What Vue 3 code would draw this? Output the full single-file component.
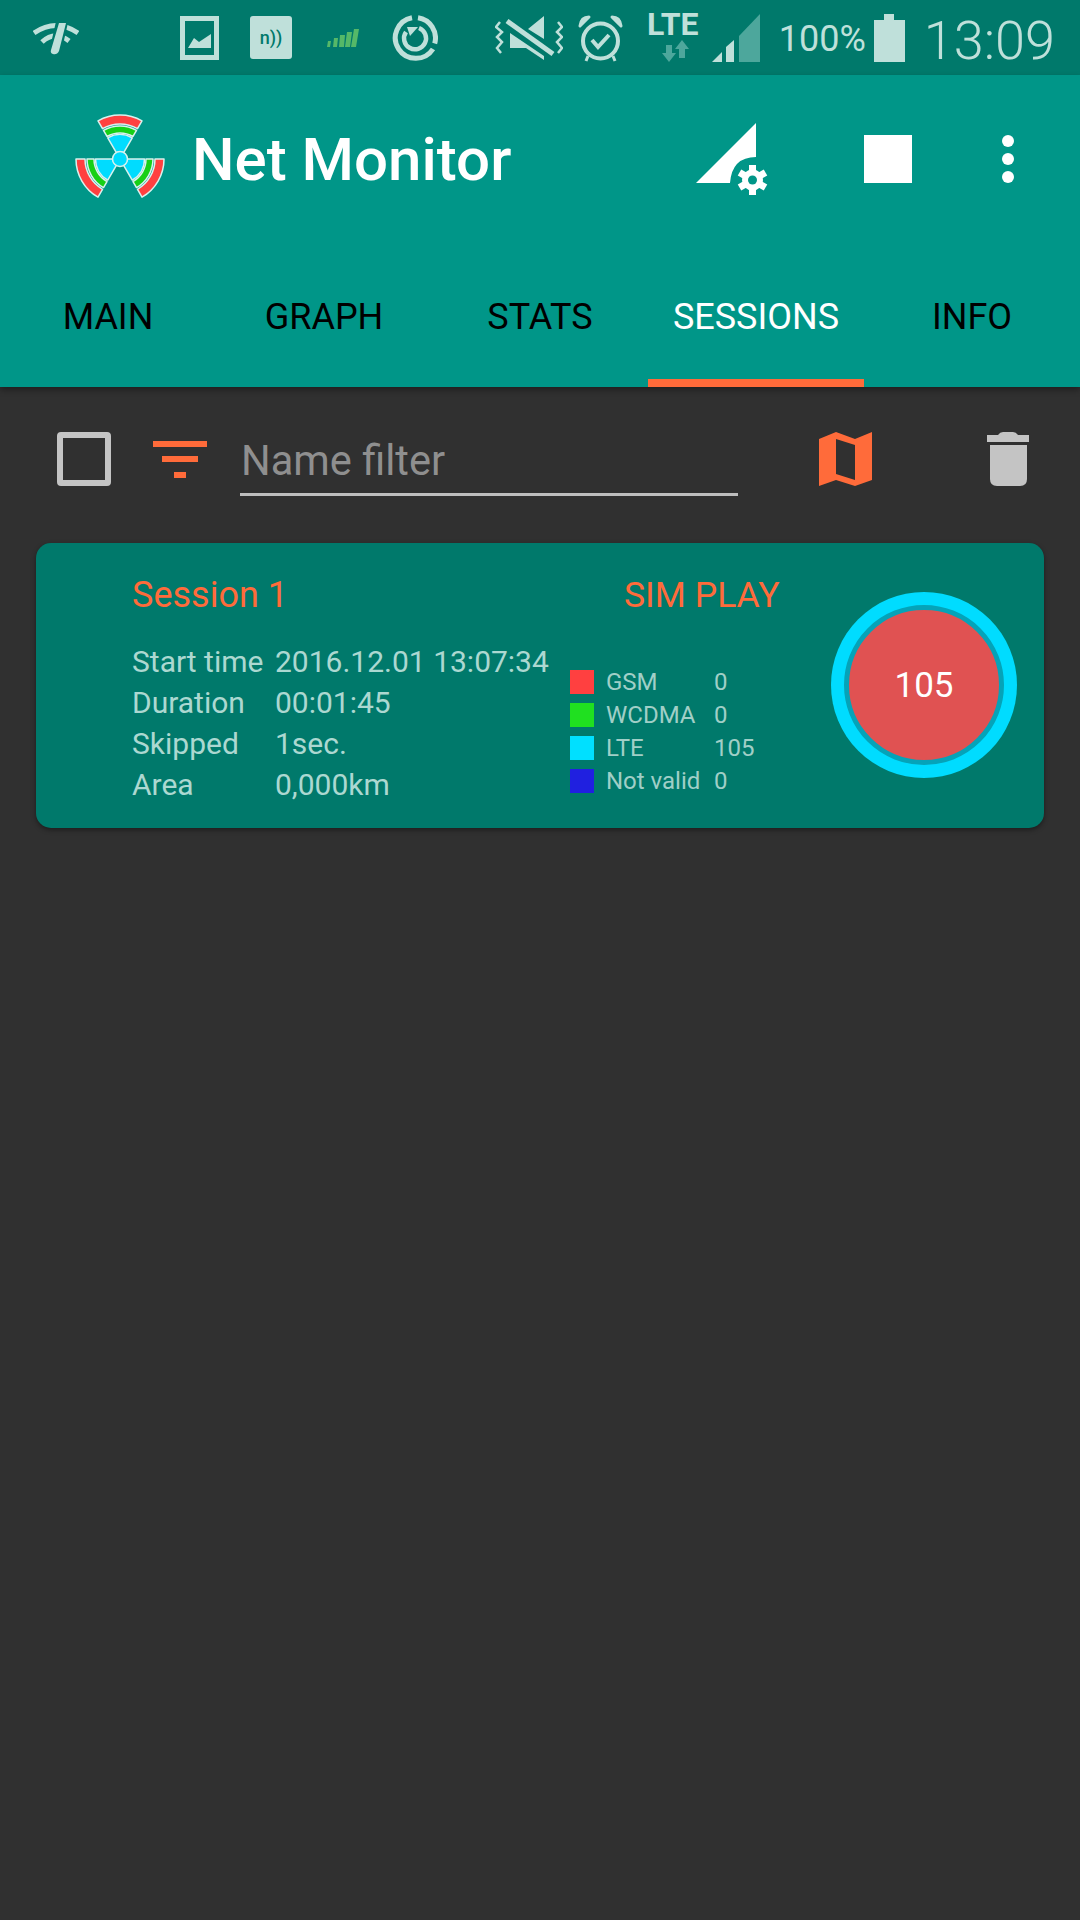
<script setup>
const tabs = [
  { label: 'MAIN', active: false },
  { label: 'GRAPH', active: false },
  { label: 'STATS', active: false },
  { label: 'SESSIONS', active: true },
  { label: 'INFO', active: false }
]
const details = [
  ['Start time', '2016.12.01 13:07:34'],
  ['Duration', '00:01:45'],
  ['Skipped', '1sec.'],
  ['Area', '0,000km']
]
const legend = [
  { name: 'GSM', value: '0', color: '#ff4040' },
  { name: 'WCDMA', value: '0', color: '#20e020' },
  { name: 'LTE', value: '105', color: '#00e0ff' },
  { name: 'Not valid', value: '0', color: '#2020e0' }
]
const sector = (r1, r2, half) => {
  const a = (half * Math.PI) / 180
  const s = Math.sin(a)
  const c = Math.cos(a)
  const p = (r, sx) => `${(sx * r * s).toFixed(2)} ${(-r * c).toFixed(2)}`
  return `M${p(r1, -1)} L${p(r2, -1)} A${r2} ${r2} 0 0 1 ${p(r2, 1)} L${p(r1, 1)} A${r1} ${r1} 0 0 0 ${p(r1, -1)} Z`
}
const blades = [0, 120, 240]
const bands = [
  { d: sector(35, 44, 30), fill: '#ff4040' },
  { d: sector(26, 33, 30), fill: '#16d016' },
  { d: sector(7, 24.5, 30), fill: '#00dcff' }
]
</script>

<template>
  <div class="screen">
    <header class="status">
      <div class="status-left">
        <svg class="s-wifi" width="46" height="33" viewBox="0 0 46 33">
          <path d="M1 11 Q23 -4 45 11" fill="none" stroke="#bfe0da" stroke-width="5"/>
          <path d="M9 20 Q22 8 36 19" fill="none" stroke="#bfe0da" stroke-width="5"/>
          <path d="M29 0 L22 31" stroke="#00796b" stroke-width="12"/>
          <path d="M26 1 L33 1 L26 29 Q24 33 20 32 Q17 31 18 28 Z" fill="#bfe0da"/>
        </svg>
        <svg class="s-pic" width="39" height="44" viewBox="0 0 39 44">
          <rect x="2.5" y="2.5" width="34" height="39" fill="none" stroke="#bfe0da" stroke-width="5"/>
          <path d="M8 32 L14 22 L19 26 L31 18 V32 Z" fill="#bfe0da"/>
        </svg>
        <div class="s-nfc"><span>n))</span></div>
        <svg class="s-bars" width="32" height="20" viewBox="0 0 32 20">
          <path d="M1 13h3l-1 6H0zM7 10h4l-1 9H6zM13 7h5l-1 12h-5zM20 4h5l-2 15h-5zM27 1h5l-3 18h-5z" fill="#55b868"/>
        </svg>
        <svg class="s-sync" width="46" height="46" viewBox="0 0 46 46">
          <path d="M26 2.7 A20.5 20.5 0 0 1 42.7 28.5" fill="none" stroke="#bfe0da" stroke-width="5"/>
          <path d="M41 34 A20.5 20.5 0 1 1 20 2.7" fill="none" stroke="#bfe0da" stroke-width="5"/>
          <path d="M14 17 A11 11 0 1 0 27 13" fill="none" stroke="#bfe0da" stroke-width="4.5"/>
          <path d="M15 12 H26 L18 21 Z" fill="#bfe0da"/>
        </svg>
      </div>
      <div class="status-right">
        <svg class="s-mute" width="68" height="44" viewBox="0 0 68 44">
          <path d="M5 6 L1 11 L7 16 L2 21 L7 26 L2 32 L6 37" fill="none" stroke="#bfe0da" stroke-width="2.5"/>
          <path d="M63 6 L67 11 L62 16 L67 21 L62 26 L67 32 L63 37" fill="none" stroke="#bfe0da" stroke-width="2.5"/>
          <path d="M12 5 L58 38" stroke="#bfe0da" stroke-width="5"/>
          <path d="M15 17 L49 40 V44 L31 32 H15 Z M33 13 L49 0 V23 Z" fill="#bfe0da"/>
        </svg>
        <svg class="s-alarm" width="45" height="48" viewBox="0 0 45 48">
          <circle cx="22.5" cy="27" r="17.5" fill="none" stroke="#bfe0da" stroke-width="4"/>
          <path d="M2 12 Q3 3 11 3 Z M43 12 Q42 3 34 3 Z" fill="#bfe0da" stroke="#bfe0da" stroke-width="3" stroke-linejoin="round"/>
          <path d="M14 26 L20 33 L31 21" fill="none" stroke="#bfe0da" stroke-width="4"/>
          <path d="M10 42 L8 47 M35 42 L37 47" stroke="#bfe0da" stroke-width="3"/>
        </svg>
        <div class="s-lte">
          <span>LTE</span>
          <svg width="27" height="22" viewBox="0 0 27 22">
            <path d="M4 5 H10 V13 H14 L7 22 L0 13 H4 Z" fill="#4da79c"/>
            <path d="M20 0 L27 9 H23 V18 H17 V9 H13 Z" fill="#4da79c"/>
          </svg>
        </div>
        <svg class="s-signal" width="48" height="48" viewBox="0 0 48 48">
          <path d="M0 48 L10 38 V48 Z" fill="#bfe0da"/>
          <path d="M14 33 L22 26 V48 H14 Z" fill="#bfe0da"/>
          <path d="M27 22 L48 0 V48 H27 Z" fill="#4da79c"/>
        </svg>
        <span class="s-pct">100%</span>
        <svg class="s-batt" width="31" height="48" viewBox="0 0 31 48">
          <path d="M10 0 H20 V6 H31 V48 H0 V6 H10 Z" fill="#bfe0da"/>
        </svg>
        <span class="s-time">13:09</span>
      </div>
    </header>

    <section class="appbar">
      <div class="toolbar">
        <svg class="logo" width="94" height="90" viewBox="-47 -46 94 90">
          <g v-for="b in blades" :key="b" :transform="`rotate(${b})`">
            <path v-for="s in bands" :key="s.fill" :d="s.d" :fill="s.fill" stroke="#d8f2ee" stroke-width="1.5" stroke-linejoin="round"/>
          </g>
          <circle r="7.5" fill="#00dcff" stroke="#d8f2ee" stroke-width="1.5"/>
        </svg>
        <h1 class="title">Net Monitor</h1>
        <svg class="a-signal" width="74" height="74" viewBox="0 0 74 74">
          <path d="M0 60 L60 0 V34 Q36 34 34 60 Z" fill="#fff"/>
          <g transform="translate(56.5,57)" fill="#fff">
            <circle r="10.5"/>
            <rect x="-3.5" y="-15" width="7" height="30"/>
            <rect x="-3.5" y="-15" width="7" height="30" transform="rotate(60)"/>
            <rect x="-3.5" y="-15" width="7" height="30" transform="rotate(120)"/>
            <circle r="4.5" fill="#009688"/>
          </g>
        </svg>
        <div class="stop"></div>
        <div class="more"><i></i><i></i><i></i></div>
      </div>
      <nav class="tabs">
        <div v-for="t in tabs" :key="t.label" class="tab" :class="{ active: t.active }">{{ t.label }}</div>
      </nav>
    </section>

    <main class="content">
      <div class="filters">
        <div class="checkbox"></div>
        <svg class="filter-ic" width="54" height="37" viewBox="0 0 54 37">
          <path d="M0 0 H54 V6 H0 Z M9 15 H45 V21 H9 Z M21 31 H33 V37 H21 Z" fill="#ff6b3a"/>
        </svg>
        <div class="field">Name filter</div>
        <svg class="map-ic" width="54" height="54" viewBox="0 0 54 54">
          <path fill-rule="evenodd" d="M0 7 L17 0 L36 7 L53 0 V48 L36 54 L17 48 L0 54 Z M17 7 V42 L36 48 V13 Z" fill="#ff6b3a"/>
        </svg>
        <svg class="trash-ic" width="42" height="54" viewBox="0 0 42 54">
          <path d="M11 3 Q13 0 16 0 H26 Q29 0 31 3 H42 V10 H0 V3 Z" fill="#c4c4c4"/>
          <path d="M3 13 H40 V47 Q40 54 33 54 H10 Q3 54 3 47 Z" fill="#c4c4c4"/>
        </svg>
      </div>

      <article class="card">
        <div class="info">
          <div class="session-name">Session 1</div>
          <div class="details">
            <template v-for="d in details" :key="d[0]">
              <span>{{ d[0] }}</span><span>{{ d[1] }}</span>
            </template>
          </div>
        </div>
        <div class="middle">
          <div class="mode">SIM PLAY</div>
          <div class="legend">
            <template v-for="l in legend" :key="l.name">
              <i class="swatch" :style="{ background: l.color }"></i><span>{{ l.name }}</span><span>{{ l.value }}</span>
            </template>
          </div>
        </div>
        <div class="ring"><div class="disc">105</div></div>
      </article>
    </main>
  </div>
</template>

<style>
html, body { margin: 0; background: #303030; }
</style>

<style scoped>
.screen {
  width: 1080px;
  height: 1920px;
  display: flex;
  flex-direction: column;
  background: #303030;
  font-family: Roboto, "Liberation Sans", sans-serif;
  overflow: hidden;
}
.status {
  height: 75px;
  background: #00796b;
  display: flex;
  align-items: center;
  justify-content: space-between;
  color: #bfe0da;
}
.status-left, .status-right { display: flex; align-items: center; }
.s-wifi { margin-left: 33px; margin-bottom: -1px; }
.s-pic { margin-left: 101px; }
.s-nfc {
  margin-left: 31px;
  width: 42px;
  height: 43px;
  border-radius: 3px;
  background: #bfe0da;
  color: #00796b;
  display: flex;
  align-items: center;
  justify-content: center;
  font-size: 18px;
  font-weight: 500;
}
.s-bars { margin-left: 35px; margin-top: 1px; }
.s-sync { margin-left: 33px; }
.status-right { padding-right: 25px; }
.s-mute { margin-right: 15px; }
.s-alarm { margin-right: 25px; }
.s-lte { width: 50px; display: flex; flex-direction: column; align-items: center; margin-right: 14px; }
.s-lte span { font-size: 32px; font-weight: 700; line-height: 22px; }
.s-lte svg { margin-top: 5px; margin-left: 6px; }
.s-signal { margin-right: 19px; }
.s-pct { font-size: 36px; margin-right: 8px; margin-top: 3px; }
.s-batt { margin-right: 19px; }
.s-time { font-size: 54px; font-weight: 300; margin-top: 5px; }
.appbar {
  height: 312px;
  background: #009688;
  display: flex;
  flex-direction: column;
  box-shadow: 0 3px 6px rgba(0, 0, 0, .35);
  position: relative;
}
.toolbar { height: 168px; display: flex; align-items: center; }
.logo { margin-left: 73px; margin-top: -2px; }
.title {
  margin: 0 0 0 25px;
  flex: 1;
  color: #fff;
  font-size: 60px;
  font-weight: 500;
}
.a-signal { margin-right: 94px; margin-top: 2px; }
.stop { width: 48px; height: 48px; background: #fff; margin-right: 90px; }
.more { display: flex; flex-direction: column; gap: 6px; margin-right: 66px; }
.more i { width: 12px; height: 12px; border-radius: 50%; background: #fff; }
.tabs { flex: 1; display: flex; }
.tab {
  flex: 1;
  display: flex;
  align-items: center;
  justify-content: center;
  color: #000;
  font-size: 36px;
  padding-top: 12px;
  border-bottom: 8px solid transparent;
  box-sizing: border-box;
}
.tab.active { color: #fff; border-bottom-color: #ff6b3a; }
.content { flex: 1; }
.filters { height: 157px; box-sizing: border-box; padding-top: 45px; display: flex; align-items: flex-start; }
.checkbox {
  width: 42px;
  height: 42px;
  margin-left: 57px;
  border: 6px solid #c4c4c4;
  border-radius: 4px;
}
.filter-ic { margin-left: 42px; margin-top: 9px; }
.field {
  margin-left: 33px;
  width: 498px;
  height: 64px;
  box-sizing: border-box;
  padding-left: 1px;
  border-bottom: 3px solid #bdbdbd;
  color: #8f8f8f;
  font-size: 41.6px;
  line-height: 58px;
}
.map-ic { margin-left: 81px; }
.trash-ic { margin-left: 114px; }
.card {
  margin: -1px 36px 0;
  height: 285px;
  border-radius: 15px;
  background: #00796b;
  box-shadow: 0 2px 5px rgba(0, 0, 0, .4);
  display: flex;
  position: relative;
}
.info { margin-left: 96px; width: 402px; }
.session-name { color: #ff6b3a; font-size: 36px; margin-top: 31px; line-height: 42px; }
.details {
  margin-top: 25px;
  display: grid;
  grid-template-columns: 143px auto;
  color: #acd8d1;
  font-size: 30px;
  line-height: 41px;
  white-space: nowrap;
}
.middle { width: 300px; margin-left: 36px; }
.mode { color: #ff6b3a; font-size: 35.6px; margin-top: 31px; line-height: 42px; margin-left: 54px; white-space: nowrap; }
.legend {
  margin-top: 49px;
  display: grid;
  grid-template-columns: 24px 96px auto;
  column-gap: 12px;
  grid-auto-rows: 33px;
  align-items: center;
  color: #a0cfc7;
  font-size: 24px;
}
.swatch { width: 24px; height: 24px; display: block; }
.ring {
  position: absolute;
  right: 27px;
  top: 49px;
  width: 186px;
  height: 186px;
  box-sizing: border-box;
  border-radius: 50%;
  background: #00dcff;
  display: flex;
  align-items: center;
  justify-content: center;
}
.disc {
  width: 150px;
  height: 150px;
  border: 5px solid #05a3b8;
  border-radius: 50%;
  background: #e05252;
  color: #fff;
  font-size: 35px;
  display: flex;
  align-items: center;
  justify-content: center;
  box-sizing: content-box;
}
</style>
